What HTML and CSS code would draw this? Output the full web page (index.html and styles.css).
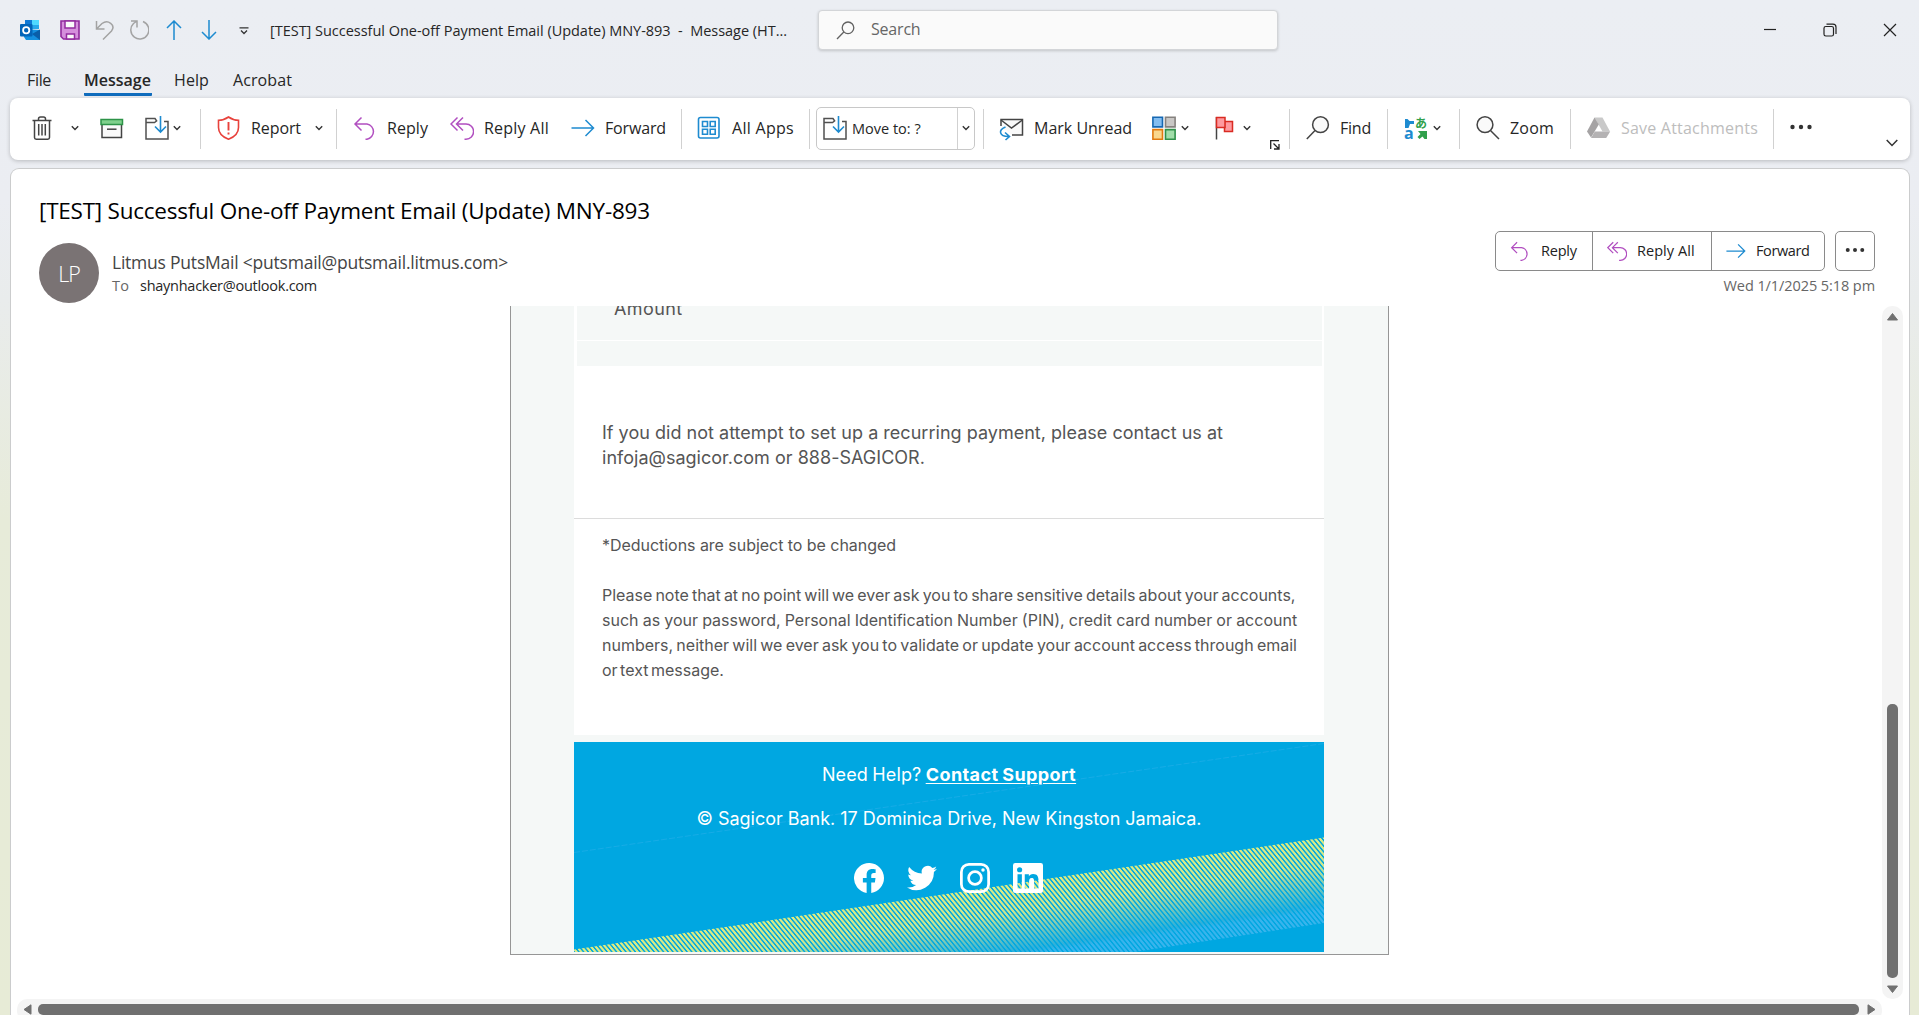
FILE: index.html
```html
<!DOCTYPE html>
<html lang="en">
<head>
<meta charset="utf-8">
<title>[TEST] Successful One-off Payment Email (Update) MNY-893</title>
<link rel="stylesheet" href="styles.css">
</head>
<body>
<svg class="sprite" aria-hidden="true">
  <symbol id="i-chev" viewBox="0 0 8 6"><path d="M.8 1.2 4 4.4 7.2 1.2" fill="none" stroke="#333" stroke-width="1.4"/></symbol>
  <symbol id="i-reply" viewBox="0 0 24 24"><path d="M8.500 1.500 2 8 8.500 14.500M2 8H14a7.700 7.700 0 0 1 0 15.200H12.500" fill="none" stroke="#b14fc0" stroke-width="1.500"/></symbol>
  <symbol id="i-replyall" viewBox="0 0 24 24"><path d="M7.500 1.500 1 8l6.500 6.500M13 1.500 6.500 8l6.500 6.500M6.500 8H16a7.600 7.600 0 0 1 0 15.200H14.500" fill="none" stroke="#b14fc0" stroke-width="1.500"/></symbol>
  <symbol id="i-forward" viewBox="0 0 24 24"><path d="M.5 12H22.500M14.500 4l8 8-8 8" fill="none" stroke="#1e8bd0" stroke-width="1.500"/></symbol>
  <symbol id="i-folder" viewBox="0 0 24 24"><path d="M12 5.500 10 2.500H1v20.500H23V5.500H19M1 6.500H9.500L11.500 5" fill="none" stroke="#505050" stroke-width="1.500"/><path d="M15.500 0V16M10 10.500l5.500 5.500 5.500-5.500" fill="none" stroke="#1e8bd0" stroke-width="1.600"/></symbol>
</svg>

<header class="titlebar">
  <svg class="ic20" viewBox="0 0 20 20"><path d="M5 0h14v9H5z" fill="#28a8ea"/><path d="M12 0h7v5h-7z" fill="#50d9ff"/><path d="M5 0h7v5H5z" fill="#0f78d4"/><path d="M4 9 20 10v10H6l-2-3z" fill="#1490df"/><path d="M12 14 20 9.500V20z" fill="#0a5ea8"/><rect y="4" width="12.500" height="12.500" rx="1" fill="#0364b8"/><circle cx="6.200" cy="10.200" r="3.100" fill="none" stroke="#fff" stroke-width="1.800"/></svg>
  <svg class="ic20 save" viewBox="0 0 20 20"><path d="M1 1H19V19H3.500L1 16.500Z" fill="#d58fdc" stroke="#922b9e" stroke-width="1.600"/><path d="M5 1h10v7H5zM6.500 19v-5h8v5z" fill="#fafafa" stroke="#922b9e" stroke-width="1.500"/></svg>
  <svg class="ic20 undo" viewBox="0 0 20 20"><path d="M1.500 1v8H9.500M1.500 9 7 3.500C13 -1 21 5 16.500 11L8 19.500" fill="none" stroke="#a3a3a3" stroke-width="1.500"/></svg>
  <svg class="ic20 redo" viewBox="0 0 20 20"><path d="M2 1H8V7.500M14 1.500A9 9 0 1 1 4.500 3.500L8 1" fill="none" stroke="#a3a3a3" stroke-width="1.500"/></svg>
  <svg class="ic20 up" viewBox="0 0 20 20"><path d="M10 20V1M3 8l7-7 7 7" fill="none" stroke="#1e8bd0" stroke-width="1.500"/></svg>
  <svg class="ic20 down" viewBox="0 0 20 20"><path d="M10 0V19M3 12l7 7 7-7" fill="none" stroke="#1e8bd0" stroke-width="1.500"/></svg>
  <svg class="qat" viewBox="0 0 10 8"><path d="M.5 .8H9.500M2 3.500l3 3 3-3" fill="none" stroke="#333" stroke-width="1.300"/></svg>
  <span class="window-title">[TEST] Successful One-off Payment Email (Update) MNY-893&nbsp; -&nbsp; Message (HT...</span>
  <div class="search"><svg viewBox="0 0 19 19"><circle cx="12" cy="6.800" r="5.800"/><path d="M7.800 11 1 18"/></svg><span class="t-search">Search</span></div>
  <svg class="wc min" viewBox="0 0 14 14"><path d="M1 6.500h12"/></svg>
  <svg class="wc max" viewBox="0 0 14 14"><rect x="1" y="3.500" width="9.500" height="9.500" rx="1.800"/><path d="M3.500 1.200H10a3 3 0 0 1 3 3V11"/></svg>
  <svg class="wc close" viewBox="0 0 14 14"><path d="M1 1l12 12M13 1 1 13"/></svg>
</header>

<nav class="tabs">
  <span class="t-file">File</span><span class="t-message">Message</span><span class="t-help">Help</span><span class="t-acrobat">Acrobat</span>
</nav>

<section class="ribbon">
  <div class="group g-first">
    <svg class="ic" viewBox="0 0 24 24"><path d="M2.500 4.500h19M8.500 4.500V3q0-2 2-2h3q2 0 2 2v1.500M4.500 4.500V21.500q0 1.700 1.700 1.700h11.600q1.700 0 1.700-1.700V4.500M8.700 8v11.500M12 8v11.500M15.300 8v11.500" fill="none" stroke="#444" stroke-width="1.500"/></svg>
    <svg class="chev m17"><use href="#i-chev"/></svg>
    <svg class="ic m21" viewBox="0 0 24 24"><path d="M2 8V21.500H21.500V8" fill="#fafafa" stroke="#444" stroke-width="1.500"/><path d="M1 3.500H22.500V8.500H1z" fill="#7fd08c" stroke="#2d9348" stroke-width="1.500"/><path d="M7 13.200h9.500" stroke="#444" stroke-width="1.500"/></svg>
    <svg class="ic m21"><use href="#i-folder"/></svg>
    <svg class="chev m4"><use href="#i-chev"/></svg>
  </div>
  <div class="group">
    <svg class="ic" viewBox="0 0 24 24"><path d="M11.500 1Q16 4.200 21.500 4.200V11.500Q21.500 19.500 11.500 23.200 1.500 19.500 1.500 11.500V4.200Q7 4.200 11.500 1Z" fill="none" stroke="#e8423c" stroke-width="1.600"/><path d="M11.500 6v8.500M11.500 16.500v2" stroke="#e8423c" stroke-width="1.900"/></svg>
    <span class="label t-report">Report</span>
    <svg class="chev m14"><use href="#i-chev"/></svg>
  </div>
  <div class="group g-respond">
    <svg class="ic"><use href="#i-reply"/></svg><span class="label t-reply">Reply</span>
    <svg class="ic m22"><use href="#i-replyall"/></svg><span class="label t-replyall">Reply All</span>
    <svg class="ic m22"><use href="#i-forward"/></svg><span class="label t-forward">Forward</span>
  </div>
  <div class="group g-apps">
    <svg class="ic" viewBox="0 0 24 24" fill="none" stroke="#1e8bd0" stroke-width="1.600"><rect x="1.500" y="1.500" width="20.500" height="20.500" rx="2"/><path d="M5.500 5.500h5v5h-5zM13.200 5.500h5v5h-5zM5.500 13.200h5v5h-5zM13.200 13.200h5v5h-5z"/></svg>
    <span class="label t-apps">All Apps</span>
  </div>
  <div class="group g-move">
    <div class="movebox"><svg class="ic"><use href="#i-folder"/></svg><span class="t-move">Move to: ?</span><i></i><svg class="chev"><use href="#i-chev"/></svg></div>
  </div>
  <div class="group g-tags">
    <svg class="ic" viewBox="0 0 24 24"><path d="M2 10V3.500H23.500V19H13" fill="#fafafa" stroke="#444" stroke-width="1.500"/><path d="M2 4 12.500 12 23.500 4" fill="none" stroke="#444" stroke-width="1.500"/><path d="M6.500 11C-1 14 0 20.500 9.500 20.500M6 16.500l4.500 4-4 3.500" fill="none" stroke="#1e8bd0" stroke-width="1.600"/></svg>
    <span class="label t-unread">Mark Unread</span>
    <svg class="ic m20" viewBox="0 0 24 24" stroke-width="1.600"><path d="M.9 1.300h9.600v9.600H.9z" fill="#83bdf0" stroke="#1668b2"/><path d="M13.500 1.300h9.600v9.600h-9.600z" fill="#c9c7c5" stroke="#85827f"/><path d="M.9 13.600h9.600v9.600H.9z" fill="#f9d78d" stroke="#e07a10"/><path d="M13.500 13.600h9.600v9.600h-9.600z" fill="#a1dda9" stroke="#31914a"/></svg>
    <svg class="chev m5"><use href="#i-chev"/></svg>
    <svg class="ic m24" viewBox="0 0 24 24"><path d="M3.500 1v22.500" stroke="#444" stroke-width="1.500"/><path d="M11.500 5.500h8v10h-8z" fill="#ff9a9f" stroke="#d92b22" stroke-width="1.500"/><path d="M3.500 1.500h8.500v10H3.500z" fill="#ff9a9f" stroke="#d92b22" stroke-width="1.500"/></svg>
    <svg class="chev m6"><use href="#i-chev"/></svg>
    <svg class="launch" viewBox="0 0 10 10"><path d="M.7 9V.7H9M3.500 3.500l5 5M9 4V9H4" fill="none" stroke="#222" stroke-width="1.300"/></svg>
  </div>
  <div class="group">
    <svg class="ic" viewBox="0 0 24 24"><circle cx="14.500" cy="8.700" r="7.900" fill="#fafafa" stroke="#444" stroke-width="1.500"/><path d="M9 14.500.8 23" stroke="#444" stroke-width="1.500"/></svg>
    <span class="label t-find">Find</span>
  </div>
  <div class="group g-translate">
    <svg class="ic" viewBox="0 0 24 24"><path d="M1 3h2.500l2 2H10v3H6l-1.500 4H1z" fill="#1e8bd0"/><text x="0" y="22.500" class="g-a">a</text><text x="11" y="11.500" class="g-jp">あ</text><path d="M14 15h9v8h-2.500l-2-2.500-3 2.500-2-2 3-3z" fill="#31a04c"/></svg>
    <svg class="chev m5"><use href="#i-chev"/></svg>
  </div>
  <div class="group">
    <svg class="ic" viewBox="0 0 24 24"><circle cx="9" cy="8.700" r="7.900" fill="#fafafa" stroke="#444" stroke-width="1.500"/><path d="M14.500 14.500 23 23" stroke="#444" stroke-width="1.500"/></svg>
    <span class="label t-zoom">Zoom</span>
  </div>
  <div class="group g-save">
    <svg class="ic" viewBox="0 0 24 24"><path d="M7.500 1.500h8L23 15.500H15.500z" fill="#c9c9c9"/><path d="M7.500 1.500 11.800 8.500 4 21.500 0 15.500z" fill="#a5a3a4"/><path d="M7.800 15.500H23.200l-4 6.500H4z" fill="#b4b2b3"/></svg>
    <span class="label t-save">Save Attachments</span>
  </div>
  <svg class="dots" viewBox="0 0 22 6"><circle cx="2.500" cy="3" r="2.200"/><circle cx="11" cy="3" r="2.200"/><circle cx="19.500" cy="3" r="2.200"/></svg>
  <svg class="collapse" viewBox="0 0 12 8"><path d="M.7 1 6 6.500 11.300 1" fill="none" stroke="#333" stroke-width="1.500"/></svg>
</section>

<main class="pane">
  <header class="msg-head">
    <h1>[TEST] Successful One-off Payment Email (Update) MNY-893</h1>
    <div class="who">
      <div class="avatar">LP</div>
      <div class="addr">
        <div class="from">Litmus PutsMail &lt;putsmail@putsmail.litmus.com&gt;</div>
        <div class="to"><span class="t-to">To</span><b>shaynhacker@outlook.com</b></div>
      </div>
    </div>
    <div class="acts">
      <div class="btns">
        <div class="bgroup">
          <div class="b b1"><svg><use href="#i-reply"/></svg><span>Reply</span></div>
          <div class="b b2"><svg><use href="#i-replyall"/></svg><span>Reply All</span></div>
          <div class="b b3"><svg><use href="#i-forward"/></svg><span>Forward</span></div>
        </div>
        <div class="more"><svg class="dots" viewBox="0 0 22 6"><circle cx="3" cy="3" r="2.200"/><circle cx="11" cy="3" r="2.200"/><circle cx="19" cy="3" r="2.200"/></svg></div>
      </div>
      <div class="date">Wed 1/1/2025 5:18 pm</div>
    </div>
  </header>

  <div class="viewport">
    <article class="mail">
      <div class="sheet">
        <div class="cell amount">Amount</div>
        <div class="cell blank"></div>
        <p class="notice"><span class="t-n1">If you did not attempt to set up a recurring payment, please contact us at</span><br><span class="t-n2">infoja@sagicor.com or 888-SAGICOR.</span></p>
        <p class="fine"><span class="t-f1">*Deductions are subject to be changed</span><br><br><span class="t-f2">Please note that at no point will we ever ask you to share sensitive details about your accounts,</span><br><span class="t-f3">such as your password, Personal Identification Number (PIN), credit card number or account</span><br><span class="t-f4">numbers, neither will we ever ask you to validate or update your account access through email</span><br><span class="t-f5">or text message.</span></p>
      </div>
      <footer class="foot">
        <svg class="stripes" viewBox="0 0 750 210" preserveAspectRatio="none">
          <defs>
            <linearGradient id="hatch" gradientUnits="userSpaceOnUse" x1="0" y1="0" x2="2.790" y2="-2.310" spreadMethod="repeat">
              <stop offset="0" stop-color="#000"/><stop offset=".2" stop-color="#000"/><stop offset=".4" stop-color="#fff"/><stop offset=".8" stop-color="#fff"/><stop offset="1" stop-color="#000"/>
            </linearGradient>
            <mask id="m"><rect width="750" height="210" fill="url(#hatch)"/></mask>
            <linearGradient id="fade" gradientUnits="userSpaceOnUse" x1="750" y1="95" x2="762.700" y2="180">
              <stop offset="0" stop-color="#dcec82"/><stop offset=".32" stop-color="#cbe68f"/><stop offset=".78" stop-color="#2fb0da"/><stop offset=".84" stop-color="#38b4ec"/><stop offset="1" stop-color="#38b4ec"/>
            </linearGradient>
          </defs>
          <path d="M0 110.500 750 1.500" stroke="#22aee8" stroke-width="1" stroke-dasharray="6 2" opacity=".7"/>
          <path d="M0 207.500 750 95.500V181L560 210H0z" fill="url(#fade)" mask="url(#m)"/>
        </svg>
        <p class="help"><span class="t-help2">Need Help?</span> <a>Contact Support</a></p>
        <p class="copy">© Sagicor Bank. 17 Dominica Drive, New Kingston Jamaica.</p>
        <div class="social">
          <svg viewBox="0 0 24 24"><path fill="#fff" d="M24 12a12 12 0 1 0-13.900 11.900v-8.400H7.100V12h3V9.400c0-3 1.800-4.700 4.500-4.700 1.300 0 2.700.2 2.700.2v3h-1.500c-1.500 0-2 .9-2 1.900V12h3.400l-.5 3.500h-2.900v8.400A12 12 0 0 0 24 12z"/></svg>
          <svg viewBox="0 0 24 24"><path fill="#fff" d="M24 4.600a10 10 0 0 1-2.800.8 4.900 4.900 0 0 0 2.200-2.700c-1 .6-2 1-3.100 1.200a4.900 4.900 0 0 0-8.400 4.500A14 14 0 0 1 1.700 3.200a4.900 4.900 0 0 0 1.500 6.500 4.900 4.900 0 0 1-2.200-.6c0 2.300 1.600 4.400 3.900 4.900a5 5 0 0 1-2.200.1 4.900 4.900 0 0 0 4.600 3.400A9.900 9.900 0 0 1 0 19.500a14 14 0 0 0 21.500-12.400A10 10 0 0 0 24 4.600z"/></svg>
          <svg viewBox="0 0 24 24" fill="none" stroke="#fff" stroke-width="2.200"><rect x="1.100" y="1.100" width="21.800" height="21.800" rx="6"/><circle cx="12" cy="12" r="5.100"/><circle cx="18.400" cy="5.600" r="1.400" fill="#fff" stroke="none"/></svg>
          <svg viewBox="0 0 24 24"><path fill="#fff" fill-rule="evenodd" d="M1.800 0h20.400Q24 0 24 1.700v20.600q0 1.700-1.800 1.700H1.800Q0 24 0 22.300V1.700Q0 0 1.800 0zM3.600 9v11.400h3.500V9zM5.300 3.300a2.060 2.060 0 1 0 0 4.120 2.060 2.060 0 0 0 0-4.120zM9.400 9v11.400h3.500v-5.600c0-1.500.3-2.900 2.100-2.900s1.900 1.700 1.900 3v5.500h3.500v-6.300c0-3.100-.7-5.400-4.300-5.400-1.700 0-2.900.9-3.400 1.900V9z"/></svg>
        </div>
      </footer>
    </article>
    <div class="vbar"><svg viewBox="0 0 11 8"><path d="M5.500.5 10.500 7H.5z" fill="#707070" stroke="#707070" stroke-linejoin="round"/></svg><div class="vthumb"></div><svg viewBox="0 0 11 8"><path d="M5.500 7.500 10.500 1H.5z" fill="#707070" stroke="#707070" stroke-linejoin="round"/></svg></div>
  </div>
  <div class="hbar"><svg viewBox="0 0 9 11"><path d="M1 5.500 8 .8v9.400z" fill="#707070" stroke="#707070" stroke-linejoin="round"/></svg><div class="hthumb"></div><svg viewBox="0 0 9 11"><path d="M8 5.500 1 .8v9.400z" fill="#707070" stroke="#707070" stroke-linejoin="round"/></svg></div>
</main>
</body>
</html>
```
FILE: styles.css
```css
* { box-sizing: border-box; }
body {
  margin: 0; height: 1015px; overflow: hidden; display: flex; flex-direction: column;
  font-family: "Open Sans", "Noto Sans", sans-serif; font-size: 16px; line-height: 20px; color: #262626;
  background: linear-gradient(180deg, #ebeef3 0, #ebedf2 200px, #e9ecec 300px, #e7ebd9 520px, #e7ebd6 100%);
}
svg { display: block; flex: none; }
span, b, a { white-space: nowrap; }
p, h1 { margin: 0; font-weight: 400; }
.sprite { position: absolute; width: 0; height: 0; }

/* Title bar */
.titlebar { height: 60px; padding-left: 20px; display: flex; align-items: center; flex: none; }
.ic20 { width: 20px; height: 20px; }
.save { margin-left: 20px; }
.undo { margin-left: 15px; }
.redo { margin-left: 14px; }
.up { margin-left: 15px; }
.down { margin-left: 15px; }
.qat { width: 10px; height: 8px; margin: 2px 0 0 20px; }
.window-title { font-size: 14.5px; width: 548px; margin: 1px 0 0 21px; letter-spacing: -.026px; }
.search {
  width: 460px; height: 40px; padding-left: 17px; display: flex; align-items: center;
  background: #fafafa; border: 1px solid #d3d5d8; border-radius: 4px; box-shadow: 0 1px 3px rgba(0,0,0,.18); color: #666;
}
.search svg { width: 19px; height: 19px; fill: none; stroke: #616161; stroke-width: 1.3; }
.search span { margin: -2px 0 0 16px; }
.t-search { letter-spacing: -.2px; }
.wc { width: 14px; height: 14px; fill: none; stroke: #222; stroke-width: 1.2; }
.min { margin-left: 485px; }
.max { margin-left: 46px; }
.close { margin-left: 46px; }

/* Ribbon tabs */
.tabs { height: 38px; padding: 10px 0 0 27px; display: flex; flex: none; }
.tabs span { height: 25px; }
.t-file { width: 57px; letter-spacing: -.33px; }
.tabs .t-message { width: 68px; height: 26px; font-weight: 600; border-bottom: 3px solid #0f6cbd; border-radius: 0 0 1px 1px; }
.t-help { width: 59px; margin-left: 22px; letter-spacing: .1px; }
.t-acrobat { letter-spacing: .1px; }

/* Ribbon */
.ribbon {
  width: 1900px; height: 62px; margin-left: 10px; padding-top: 9px; display: flex; flex: none;
  background: #fff; border-radius: 8px; box-shadow: 0 1px 4px rgba(0,0,0,.22);
}
.group { height: 40px; margin-top: 2px; padding: 0 13px 0 16px; display: flex; align-items: center; border-right: 1px solid #d1d1d1; }
.ic { width: 24px; height: 24px; margin-top: -3px; overflow: visible; }
.chev { width: 8px; height: 6px; margin-top: -2px; }
.label { margin: -2px 0 0 10px; }
.g-first { padding: 0 19px 0 20px; }
.m4 { margin-left: 4px; } .m5 { margin-left: 5px; } .m6 { margin-left: 6px; } .m14 { margin-left: 14px; }
.m17 { margin-left: 17px; } .m20 { margin-left: 20px; } .m21 { margin-left: 21px; } .m22 { margin-left: 22px; } .m24 { margin-left: 24px; }
.t-report { width: 50px; letter-spacing: -.09px; }
.t-reply { width: 41px; letter-spacing: .06px; }
.t-replyall { width: 65px; letter-spacing: .21px; }
.t-forward { width: 61px; letter-spacing: -.15px; }
.g-respond { padding-right: 15px; }
.g-apps { padding: 0 15px; }
.g-apps .label, .g-tags .label { margin-left: 11px; }
.t-apps { width: 62px; letter-spacing: .29px; }
.g-move { padding: 0 8px 0 6px; }
.movebox { width: 159px; height: 43px; margin-top: -1px; padding-left: 6px; display: flex; align-items: center; border: 1px solid #c8c8c8; border-radius: 5px; font-size: 14.5px; }
.movebox .ic { margin-top: -1px; }
.t-move { width: 69px; margin-left: 5px; }
.movebox i { width: 1px; height: 41px; margin-left: 36px; background: #d1d1d1; }
.movebox .chev { margin-left: 4px; }
.g-tags { padding: 0 9px 0 15px; }
.t-unread { width: 98px; }
.launch { width: 10px; height: 10px; margin: 31px 0 0 19px; }
.group:has(.t-find), .group:has(.t-zoom) { padding-right: 16px; }
.t-find { width: 31px; letter-spacing: -.22px; }
.t-zoom { width: 44px; letter-spacing: .2px; }
.g-translate { padding-right: 18px; }
.g-a { font: 700 16px "Open Sans", sans-serif; fill: #1e8bd0; }
.g-jp { font: 700 12px "Noto Sans CJK JP", sans-serif; fill: #31a04c; }
.g-save { padding-right: 15px; }
.t-save { width: 137px; letter-spacing: .21px; color: #bdbdbd; }
.dots { width: 22px; height: 6px; fill: #333; }
.ribbon .dots { margin: 17px 0 0 16px; }
.collapse { width: 12px; height: 8px; margin: 32px 0 0 74px; }

/* Message window */
.pane {
  width: 1900px; height: 847px; margin: 8px 0 0 10px; display: flex; flex-direction: column; flex: none; overflow: hidden;
  background: #fff; border: 1px solid #cbcccd; border-bottom: 0; border-radius: 9px 9px 0 0;
}
.msg-head { height: 137px; padding: 27px 34px 0 28px; display: grid; grid-template: 30px 1fr / 1fr auto; flex: none; }
.msg-head h1 { grid-column: 1 / 3; font-size: 22.5px; line-height: 30px; letter-spacing: -.232px; color: #000; }
.who { display: flex; margin-top: 17px; gap: 13px; }
.avatar { width: 60px; height: 60px; border-radius: 50%; background: #7a7374; color: #fff; font-size: 21.5px; line-height: 62px; text-align: center; letter-spacing: -1px; font-weight: 300; }
.from { font-size: 17.5px; line-height: 24px; margin-top: 7px; letter-spacing: -.222px; color: #444; }
.to { display: flex; font-size: 14.5px; line-height: 24px; color: #666; }
.to b { font-weight: 400; color: #262626; margin-left: 11px; letter-spacing: -.262px; }
.t-to { width: 17px; letter-spacing: .14px; }
.acts { margin-top: 5px; }
.btns { display: flex; gap: 10px; }
.bgroup { width: 330px; height: 40px; display: flex; border: 1px solid #8a8a8a; border-radius: 5px; font-size: 14.5px; color: #222; }
.b { display: flex; align-items: center; border-right: 1px solid #8a8a8a; }
.b:last-child { border: 0; }
.b svg { width: 20px; height: 20px; }
.b span { margin-left: 11px; }
.b1 { width: 97px; padding-left: 14px; letter-spacing: -.2px; }
.b2 { width: 119px; padding-left: 14px; }
.b2 span { margin-left: 10px; letter-spacing: .05px; }
.b3 { padding-left: 14px; letter-spacing: -.4px; }
.b3 span { margin-left: 10px; }
.more { width: 40px; height: 40px; display: flex; align-items: center; justify-content: center; border: 1px solid #8a8a8a; border-radius: 5px; }
.more .dots { width: 20px; margin-top: -2px; }
.date { margin-top: 5px; text-align: right; font-size: 14.5px; letter-spacing: -.08px; color: #666; line-height: 20px; }

/* Mail body */
.viewport { height: 693px; display: flex; flex: none; overflow: hidden; }
.mail {
  width: 879px; height: 649px; margin-left: 499px; padding: 0 64px 0 63px; flex: none;
  background: #f5f8f7; border: 1px solid #969696; border-top: 0;
  font-family: Inter, sans-serif; color: #555; overflow: hidden;
}
.sheet { width: 750px; height: 429px; padding: 0 2px 0 3px; background: #fff; }
.cell { background: #f5f8f7; }
.amount { height: 34px; padding-left: 37px; font-size: 18px; letter-spacing: .4px; line-height: 5px; }
.blank { height: 25px; margin-top: 1px; }
.notice { margin: 0 -2px 0 -3px; height: 153px; padding: 54px 0 0 28px; font-size: 18px; line-height: 25px; border-bottom: 1px solid #dcdcdc; }
.t-n1 { letter-spacing: .022px; }
.t-n2 { letter-spacing: .02px; }
.fine { padding: 14px 0 0 25px; font-size: 16px; line-height: 25px; }
.t-f1 { letter-spacing: -.04px; }
.t-f2 { word-spacing: -1.44px; }
.t-f3 { word-spacing: -.35px; }
.t-f4 { word-spacing: -1.26px; }
.t-f5 { word-spacing: -2px; }
.foot { width: 750px; height: 210px; margin-top: 7px; background: #00a7e1; color: #fff; text-align: center; font-size: 18px; line-height: 24px; position: relative; }
.stripes { position: absolute; inset: 0; width: 750px; height: 210px; }
.help, .copy, .social { position: relative; }
.help { padding-top: 21px; letter-spacing: .15px; word-spacing: -1px; }
.help a { font-weight: 700; letter-spacing: .42px; text-decoration: underline; text-underline-offset: 2px; text-decoration-thickness: 1px; }
.copy { margin-top: 20px; letter-spacing: -.02px; }
.social { display: flex; justify-content: center; gap: 22.7px; margin-top: 32px; padding-right: 1px; }
.social svg { width: 30px; height: 30px; }

/* Scrollbars */
.vbar { width: 21px; margin-left: 493px; padding: 7px 0 6px; display: flex; flex-direction: column; align-items: center; background: #f4f4f4; border-radius: 10px; flex: none; }
.vbar svg { width: 11px; height: 8px; }
.vthumb { width: 11px; height: 274px; margin-top: auto; margin-bottom: 7px; border-radius: 5px; background: #707070; }
.hbar { width: 1865px; height: 22px; margin-left: 6px; padding: 5px 6px 0; display: flex; background: #f4f4f4; border-radius: 10px; flex: none; }
.hbar svg { width: 9px; height: 11px; }
.hthumb { width: 1821px; height: 11px; margin: 0 8px 0 6px; border-radius: 5px; background: #707070; }
```
